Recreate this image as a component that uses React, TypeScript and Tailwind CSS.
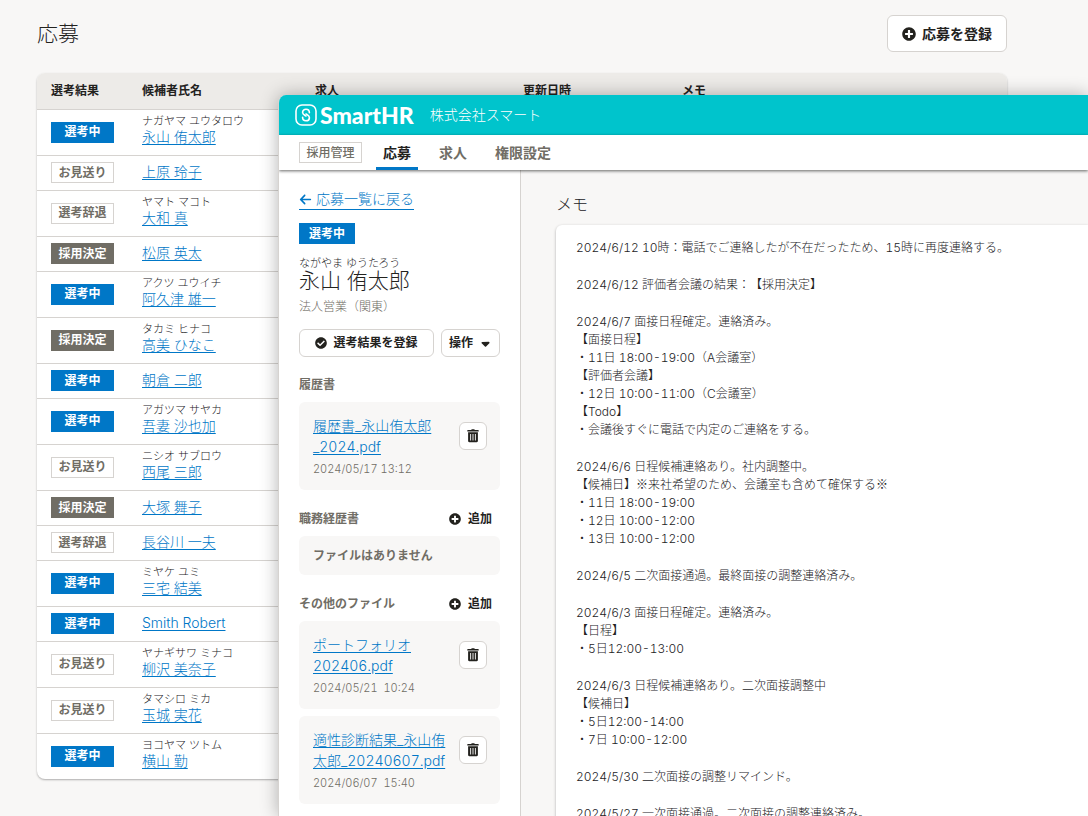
import { FaCheckCircle, FaPlusCircle } from 'react-icons/fa';
import { FaArrowLeft, FaCaretDown } from 'react-icons/fa6';

type Result = 'progress' | 'declined' | 'withdrawn' | 'hired';

type Applicant = {
  result: Result;
  name: string;
  kana?: string;
};

type FileEntry = {
  name: string;
  date: string;
};

const resultLabels: Record<Result, string> = {
  progress: '選考中',
  declined: 'お見送り',
  withdrawn: '選考辞退',
  hired: '採用決定',
};

const resultStyles: Record<Result, string> = {
  progress: 'bg-[#0077c7] border-[#0077c7] text-white',
  declined: 'bg-white border-[#d6d3d0] text-[#706d65]',
  withdrawn: 'bg-white border-[#d6d3d0] text-[#706d65]',
  hired: 'bg-[#706d65] border-[#706d65] text-white',
};

const applicants: Applicant[] = [
  { result: 'progress', name: '永山 侑太郎', kana: 'ナガヤマ ユウタロウ' },
  { result: 'declined', name: '上原 玲子' },
  { result: 'withdrawn', name: '大和 真', kana: 'ヤマト マコト' },
  { result: 'hired', name: '松原 英太' },
  { result: 'progress', name: '阿久津 雄一', kana: 'アクツ ユウイチ' },
  { result: 'hired', name: '高美 ひなこ', kana: 'タカミ ヒナコ' },
  { result: 'progress', name: '朝倉 二郎' },
  { result: 'progress', name: '吾妻 沙也加', kana: 'アガツマ サヤカ' },
  { result: 'declined', name: '西尾 三郎', kana: 'ニシオ サブロウ' },
  { result: 'hired', name: '大塚 舞子' },
  { result: 'withdrawn', name: '長谷川 一夫' },
  { result: 'progress', name: '三宅 結美', kana: 'ミヤケ ユミ' },
  { result: 'progress', name: 'Smith Robert' },
  { result: 'declined', name: '柳沢 美奈子', kana: 'ヤナギサワ ミナコ' },
  { result: 'declined', name: '玉城 実花', kana: 'タマシロ ミカ' },
  { result: 'progress', name: '横山 勤', kana: 'ヨコヤマ ツトム' },
];

const navItems = ['応募', '求人', '権限設定'];

const resumes: FileEntry[] = [{ name: '履歴書_永山侑太郎\n_2024.pdf', date: '2024/05/17 13:12' }];

const otherFiles: FileEntry[] = [
  { name: 'ポートフォリオ\n202406.pdf', date: '2024/05/21  10:24' },
  { name: '適性診断結果_永山侑\n太郎_20240607.pdf', date: '2024/06/07  15:40' },
];

const memos: string[] = [
  '2024/6/12 10時：電話でご連絡したが不在だったため、15時に再度連絡する。',
  '2024/6/12 評価者会議の結果：【採用決定】',
  '2024/6/7 面接日程確定。連絡済み。\n【面接日程】\n・11日 18:00-19:00（A会議室）\n【評価者会議】\n・12日 10:00-11:00（C会議室）\n【Todo】\n・会議後すぐに電話で内定のご連絡をする。',
  '2024/6/6 日程候補連絡あり。社内調整中。\n【候補日】※来社希望のため、会議室も含めて確保する※\n・11日 18:00-19:00\n・12日 10:00-12:00\n・13日 10:00-12:00',
  '2024/6/5 二次面接通過。最終面接の調整連絡済み。',
  '2024/6/3 面接日程確定。連絡済み。\n【日程】\n・5日12:00-13:00',
  '2024/6/3 日程候補連絡あり。二次面接調整中\n【候補日】\n・5日12:00-14:00\n・7日 10:00-12:00',
  '2024/5/30 二次面接の調整リマインド。',
  '2024/5/27 一次面接通過。二次面接の調整連絡済み。',
];

function StatusLabel({ result, className }: { result: Result; className: string }) {
  return (
    <span
      className={`flex h-[21px] items-center justify-center border text-xs font-bold whitespace-nowrap ${resultStyles[result]} ${className}`}
    >
      {resultLabels[result]}
    </span>
  );
}

function TrashIcon() {
  return (
    <svg viewBox="0 0 12 14" className="h-[14px] w-3" aria-hidden="true">
      <path
        fill="currentColor"
        fillRule="evenodd"
        d="M4.200 1 4.700.2h2.600l.5.8h3.400c.3 0 .5.2.5.5v.9H.3v-.9C.3 1.200.5 1 .8 1zM1.100 3.300h9.800v8.700c0 .7-.5 1.200-1.200 1.200H2.300c-.7 0-1.200-.5-1.200-1.200zM3.200 5v6.500h.9V5zm2.350 0v6.500h.9V5zM7.900 5v6.500h.9V5z"
      />
    </svg>
  );
}

function LogoMark() {
  return (
    <svg
      viewBox="0 0 22 22"
      className="size-[22px]"
      fill="none"
      stroke="currentColor"
      strokeWidth="1.6"
      strokeLinecap="round"
      aria-hidden="true"
    >
      <rect x="1" y="1" width="20" height="20" rx="6" />
      <path d="M14.400 8.700C14.400 6.500 12.900 5.200 11 5.200S7.600 6.500 7.600 8.300C7.600 9.800 8.500 10.500 9.700 11.200L11 12" />
      <path d="M7.600 13.300C7.600 15.500 9.100 16.800 11 16.800S14.400 15.500 14.400 13.700C14.400 12.200 13.500 11.500 12.300 10.800L11 10" />
    </svg>
  );
}

function FileCard({ file }: { file: FileEntry }) {
  return (
    <li className="flex items-start justify-between rounded-md bg-[#f8f7f6] pt-[13px] pr-[13px] pb-[11px] pl-[14px]">
      <div>
        <a href="#file" className="block text-sm leading-[21px] whitespace-pre text-[#0077c7] underline underline-offset-2">
          {file.name}
        </a>
        <p className="mt-[3px] text-[11px] leading-[19px] whitespace-pre text-[#706d65]">{file.date}</p>
      </div>
      <button
        type="button"
        aria-label="削除"
        className="mt-[7px] flex size-7 shrink-0 items-center justify-center rounded-md border border-[#d6d3d0] bg-white"
      >
        <TrashIcon />
      </button>
    </li>
  );
}

function SectionHeading({ title, addable }: { title: string; addable?: boolean }) {
  return (
    <div className="flex h-[19px] items-center justify-between pr-2">
      <h3 className="text-xs font-bold text-[#706d65]">{title}</h3>
      {addable && (
        <button type="button" className="flex items-center gap-[7px] text-xs font-bold">
          <FaPlusCircle className="size-3" />
          追加
        </button>
      )}
    </div>
  );
}

// Inter ships its own narrow ※, so the mark is set in the Japanese face
function MemoText({ text }: { text: string }) {
  return (
    <p>
      {text.split(/(※)/).map((part, index) =>
        part === '※' ? (
          <span key={index} className="font-['Noto_Sans_CJK_JP',sans-serif] leading-none">
            {part}
          </span>
        ) : (
          part
        ),
      )}
    </p>
  );
}

function ApplicantTable() {
  return (
    <div className="mt-[21px] overflow-hidden rounded-lg bg-white shadow-[0_1px_2px_rgba(3,3,2,0.3)]">
      <table className="w-full table-fixed border-collapse text-left">
        <thead>
          <tr className="h-9 bg-[#edebe8] text-xs">
            <th className="w-[91px] pl-[14px] font-bold">選考結果</th>
            <th className="w-[173px] pl-[14px] font-bold">候補者氏名</th>
            <th className="w-[208px] pl-[14px] font-bold">求人</th>
            <th className="w-[159px] pl-[14px] font-bold">更新日時</th>
            <th className="pl-[14px] font-bold">メモ</th>
          </tr>
        </thead>
        <tbody>
          {applicants.map((item) => (
            <tr key={item.name} className={`border-t border-[#d6d3d0] ${item.kana ? 'h-[46px]' : 'h-[35px]'}`}>
              <td className="pl-[14px]">
                <StatusLabel result={item.result} className="w-[63px]" />
              </td>
              <td className={`pl-[14px] ${item.kana ? 'pb-1' : 'pb-0.5'}`}>
                {item.kana && <p className="text-[11px] leading-[14px]">{item.kana}</p>}
                <a href="#applicant" className="block text-sm leading-[18px] text-[#0077c7] underline underline-offset-2">
                  {item.name}
                </a>
              </td>
              <td colSpan={3} />
            </tr>
          ))}
        </tbody>
      </table>
    </div>
  );
}

function Sidebar() {
  return (
    <aside className="w-[242px] shrink-0 border-r border-[#d6d3d0] bg-white px-5 pt-[19px]">
      <a href="#list" className="flex h-[21px] w-fit items-center gap-1 border-b border-[#0077c7] text-sm text-[#0077c7]">
        <FaArrowLeft className="size-[13px]" />
        応募一覧に戻る
      </a>
      <StatusLabel result="progress" className="mt-[13px] w-14" />
      <p className="mt-3 text-[11px] leading-[14px]">ながやま ゆうたろう</p>
      <h1 className="text-[21px] leading-[22px]">永山 侑太郎</h1>
      <p className="mt-[6px] text-xs leading-[18px] text-[#706d65]">法人営業（関東）</p>
      <div className="mt-[13px] flex gap-[7px]">
        <button
          type="button"
          className="flex h-7 flex-1 items-center justify-center gap-[6px] rounded-md border border-[#d6d3d0] text-xs font-bold whitespace-nowrap"
        >
          <FaCheckCircle className="size-3" />
          選考結果を登録
        </button>
        <button
          type="button"
          className="flex h-7 items-center gap-[6px] rounded-md border border-[#d6d3d0] px-[7px] text-xs font-bold whitespace-nowrap"
        >
          操作
          <FaCaretDown className="size-[13px]" />
        </button>
      </div>

      <section className="mt-[18px]">
        <SectionHeading title="履歴書" />
        <ul className="mt-2 space-y-[7px]">
          {resumes.map((file) => (
            <FileCard key={file.name} file={file} />
          ))}
        </ul>
      </section>

      <section className="mt-[19px]">
        <SectionHeading title="職務経歴書" addable />
        <p className="mt-2 rounded-md bg-[#f8f7f6] px-[14px] py-[10px] text-xs leading-[19px] font-bold text-[#706d65]">
          ファイルはありません
        </p>
      </section>

      <section className="mt-[19px]">
        <SectionHeading title="その他のファイル" addable />
        <ul className="mt-2 space-y-[7px]">
          {otherFiles.map((file) => (
            <FileCard key={file.name} file={file} />
          ))}
        </ul>
      </section>
    </aside>
  );
}

function DetailWindow() {
  return (
    <div className="absolute top-[95px] right-0 bottom-0 left-[278px] flex flex-col overflow-hidden rounded-tl-lg border-l border-[#d6d3d0] bg-[#f8f7f6] shadow-[0_0_18px_rgba(3,3,2,0.3)]">
      <header className="flex h-10 shrink-0 items-center bg-[#00c4cc] pl-4 text-white">
        <LogoMark />
        <span className="ml-[3px] font-[Lato] text-[23px] leading-none font-black">SmartHR</span>
        <span className="ml-4 text-sm">株式会社スマート</span>
      </header>
      <nav className="relative flex h-[35px] shrink-0 items-center bg-white pl-5 shadow-[0_1px_3px_rgba(3,3,2,0.6)]">
        <span className="flex h-[21px] w-[63px] items-center justify-center border border-[#d6d3d0] text-xs font-medium text-[#706d65]">
          採用管理
        </span>
        <ul className="ml-[14px] flex h-full gap-[14px]">
          {navItems.map((item, index) => (
            <li key={item} className="h-full">
              <a
                href="#nav"
                className={`flex h-full items-center border-y-3 border-t-transparent px-[7px] text-sm font-bold ${
                  index === 0 ? 'border-b-[#0077c7]' : 'border-b-transparent text-[#706d65]'
                }`}
              >
                {item}
              </a>
            </li>
          ))}
        </ul>
      </nav>
      <div className="flex min-h-0 flex-1">
        <Sidebar />
        <main className="flex min-w-0 flex-1 flex-col pt-[22px] pl-[35px]">
          <h2 className="text-base leading-6">メモ</h2>
          <div className="mt-[9px] flex flex-1 flex-col gap-[19px] rounded-tl-md bg-white px-5 pt-[14px] text-xs leading-[18px] whitespace-pre shadow-[0_1px_3px_rgba(3,3,2,0.3)] [text-spacing-trim:space-all]">
            {memos.map((memo) => (
              <MemoText key={memo} text={memo} />
            ))}
          </div>
        </main>
      </div>
    </div>
  );
}

export default function App() {
  return (
    <div className="relative min-h-screen overflow-hidden bg-[#f8f7f6] pt-[15px] pr-[81px] pb-9 pl-[37px] font-[Inter,'Noto_Sans_CJK_JP',sans-serif] font-light text-[#23221e] tabular-nums">
      <div className="flex items-center justify-between">
        <h1 className="text-[21px] leading-7 font-light">応募</h1>
        <button
          type="button"
          className="flex h-[37px] items-center gap-[6px] rounded-md border border-[#d6d3d0] bg-white px-[14px] text-sm font-bold"
        >
          <FaPlusCircle className="size-[14px]" />
          応募を登録
        </button>
      </div>
      <ApplicantTable />
      <DetailWindow />
    </div>
  );
}
